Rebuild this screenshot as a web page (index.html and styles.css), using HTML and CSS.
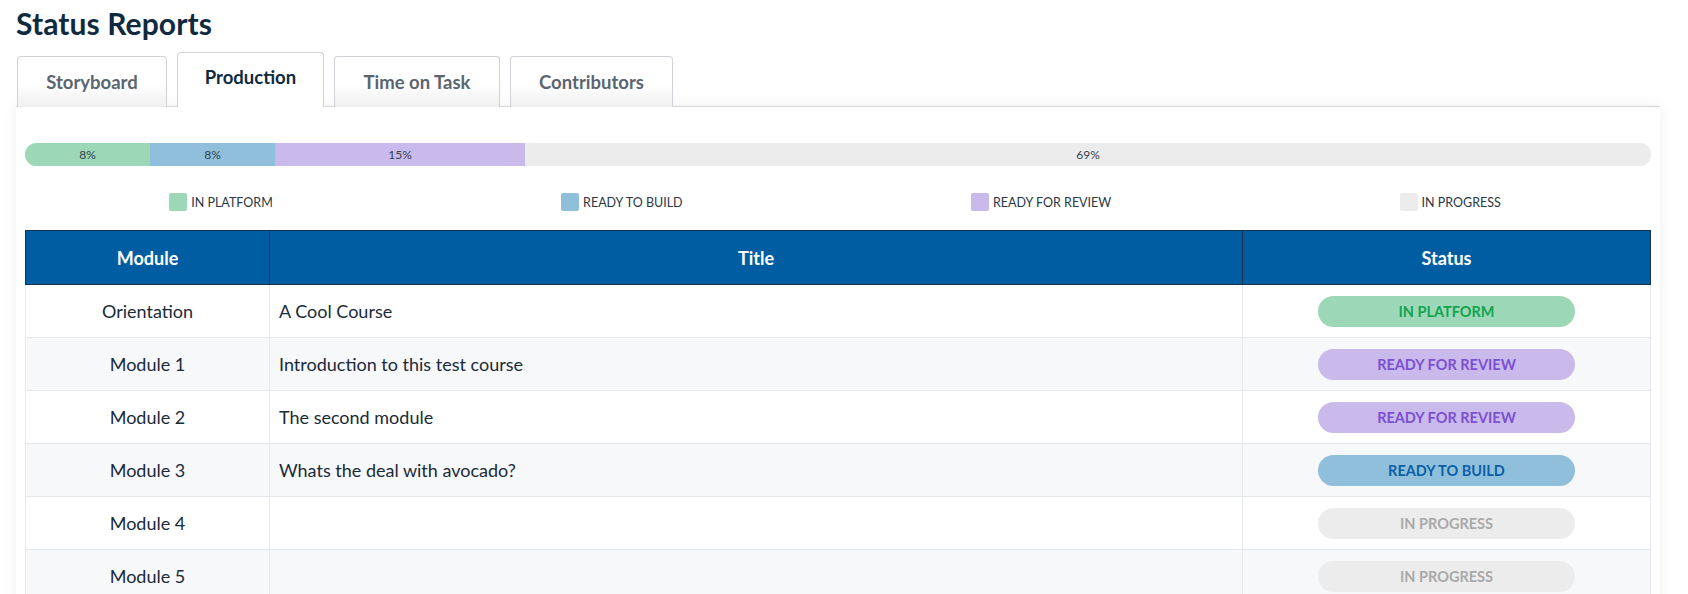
FILE: index.html
```html
<!DOCTYPE html>
<html>
<head>
<meta charset="utf-8">
<link rel="stylesheet" href="styles.css">
</head>
<body>
<div class="page">
  <h1 class="page-title">Status Reports</h1>
  <div class="tabs">
    <div class="tab">Storyboard</div>
    <div class="tab tab-active">Production</div>
    <div class="tab">Time on Task</div>
    <div class="tab">Contributors</div>
  </div>
  <div class="panel">
    <div class="bar">
      <div class="seg seg-platform" style="width:7.69%">8%</div>
      <div class="seg seg-build" style="width:7.69%">8%</div>
      <div class="seg seg-review" style="width:15.38%">15%</div>
      <div class="seg seg-progress" style="width:69.24%">69%</div>
    </div>
    <div class="legend">
      <div class="legend-item"><span class="swatch seg-platform"></span>IN PLATFORM</div>
      <div class="legend-item"><span class="swatch seg-build"></span>READY TO BUILD</div>
      <div class="legend-item"><span class="swatch seg-review"></span>READY FOR REVIEW</div>
      <div class="legend-item"><span class="swatch seg-progress"></span>IN PROGRESS</div>
    </div>
    <table class="report">
      <thead>
        <tr><th class="col-module">Module</th><th class="col-title">Title</th><th class="col-status">Status</th></tr>
      </thead>
      <tbody>
        <tr><td class="cell-module">Orientation</td><td class="cell-title">A Cool Course</td><td class="cell-status"><span class="badge badge-platform">IN PLATFORM</span></td></tr>
        <tr><td class="cell-module">Module 1</td><td class="cell-title">Introduction to this test course</td><td class="cell-status"><span class="badge badge-review">READY FOR REVIEW</span></td></tr>
        <tr><td class="cell-module">Module 2</td><td class="cell-title">The second module</td><td class="cell-status"><span class="badge badge-review">READY FOR REVIEW</span></td></tr>
        <tr><td class="cell-module">Module 3</td><td class="cell-title">Whats the deal with avocado?</td><td class="cell-status"><span class="badge badge-build">READY TO BUILD</span></td></tr>
        <tr><td class="cell-module">Module 4</td><td class="cell-title"></td><td class="cell-status"><span class="badge badge-progress">IN PROGRESS</span></td></tr>
        <tr><td class="cell-module">Module 5</td><td class="cell-title"></td><td class="cell-status"><span class="badge badge-progress">IN PROGRESS</span></td></tr>
      </tbody>
    </table>
  </div>
</div>
</body>
</html>
```

FILE: styles.css
```css
* { box-sizing: border-box; }
html, body { margin: 0; padding: 0; background: #ffffff; }
body { font-family: "Lato", "Noto Sans", sans-serif; color: #13283a; }

.page { padding: 5px 28px 0 16px; }

.page-title {
  margin: 0;
  font-size: 30px;
  line-height: 36px;
  font-weight: 700;
  color: #0f2a3f;
  letter-spacing: 0.1px;
}

.tabs {
  display: flex;
  align-items: flex-end;
  gap: 10px;
  margin-top: 11px;
  padding-left: 1px;
  position: relative;
  z-index: 2;
  margin-bottom: -1px;
}
.tab {
  height: 51px;
  padding: 0 20px;
  display: flex;
  align-items: center;
  justify-content: center;
  font-size: 18.5px;
  font-weight: 700;
  color: #5b6570;
  border: 1px solid #cfd2d6;
  border-bottom: none;
  border-radius: 4px 4px 0 0;
  background: linear-gradient(#ffffff 55%, #efefef);
}
.tab:nth-child(1) { width: 150px; }
.tab:nth-child(3) { width: 166px; }
.tab:nth-child(4) { width: 163px; }
.tab-active {
  height: 55px;
  width: 147px;
  color: #0f2a3f;
  background: #ffffff;
  align-items: flex-start;
  padding-top: 13px;
}

.panel {
  background: #ffffff;
  border-top: 1px solid #d6d6d6;
  box-shadow: 0 0 14px rgba(0, 0, 0, 0.07);
  padding: 36px 9px 40px;
}

.bar {
  display: flex;
  height: 23px;
  border-radius: 12px;
  overflow: hidden;
  background: #ececec;
}
.seg {
  display: flex;
  align-items: center;
  justify-content: center;
  font-size: 12px;
  color: #33404d;
}
.seg-platform { background: #9cd8b7; }
.seg-build { background: #8fbfdb; }
.seg-review { background: #c9baeb; }
.seg-progress { background: #ececec; }

.legend {
  display: flex;
  justify-content: space-around;
  margin-top: 27px;
  padding-right: 6px;
}
.legend-item {
  display: flex;
  align-items: center;
  gap: 4px;
  font-size: 12.5px;
  color: #2a3744;
  height: 18px;
}
.swatch {
  width: 18px;
  height: 18px;
  border-radius: 2px;
}

.report {
  width: 100%;
  margin-top: 19px;
  border-collapse: collapse;
  table-layout: fixed;
}
.report th {
  background: #015da2;
  color: #ffffff;
  font-weight: 700;
  font-size: 18px;
  height: 54px;
  border: 1px solid #17324d;
  text-align: center;
}
.col-module { width: 244px; }
.col-status { width: 408px; }
.report td {
  height: 53px;
  border: 1px solid #e4e7ec;
  font-size: 18px;
  color: #1a2a38;
  padding: 0;
}
.report tbody tr:nth-child(even) td { background: #f7f8fa; }
.cell-module { text-align: center; }
.cell-title { padding-left: 9px !important; }
.cell-status { text-align: center; }

.badge {
  display: inline-flex;
  align-items: center;
  justify-content: center;
  width: 257px;
  height: 31px;
  border-radius: 16px;
  font-size: 14.5px;
  font-weight: 700;
  vertical-align: middle;
}
.badge-platform { background: #9cd8b7; color: #13a34f; }
.badge-review { background: #c9baeb; color: #7c50d2; }
.badge-build { background: #8fbfdb; color: #0a5fa6; }
.badge-progress { background: #ececec; color: #a9a9a9; }
```
